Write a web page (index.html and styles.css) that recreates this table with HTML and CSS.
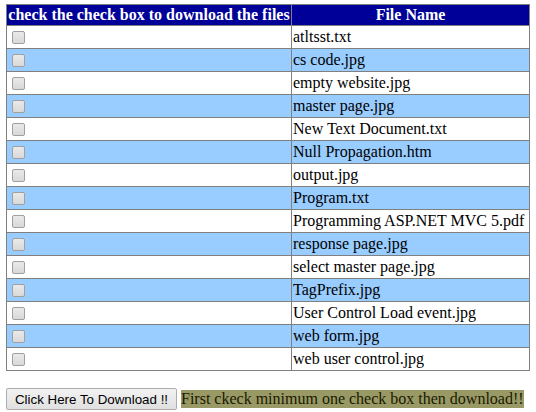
FILE: index.html
```html
<!DOCTYPE html>
<html>
<head>
<meta charset="utf-8">
<title>Download files</title>
<link rel="stylesheet" href="styles.css">
</head>
<body>
<table class="grid">
  <colgroup><col class="c1"><col class="c2"></colgroup>
  <thead>
    <tr><th>check the check box to download the files</th><th>File Name</th></tr>
  </thead>
  <tbody>
    <tr><td><input type="checkbox"></td><td>atltsst.txt</td></tr>
    <tr class="alt"><td><input type="checkbox"></td><td>cs code.jpg</td></tr>
    <tr><td><input type="checkbox"></td><td>empty website.jpg</td></tr>
    <tr class="alt"><td><input type="checkbox"></td><td>master page.jpg</td></tr>
    <tr><td><input type="checkbox"></td><td>New Text Document.txt</td></tr>
    <tr class="alt"><td><input type="checkbox"></td><td>Null Propagation.htm</td></tr>
    <tr><td><input type="checkbox"></td><td>output.jpg</td></tr>
    <tr class="alt"><td><input type="checkbox"></td><td>Program.txt</td></tr>
    <tr><td><input type="checkbox"></td><td>Programming ASP.NET MVC 5.pdf</td></tr>
    <tr class="alt"><td><input type="checkbox"></td><td>response page.jpg</td></tr>
    <tr><td><input type="checkbox"></td><td>select master page.jpg</td></tr>
    <tr class="alt"><td><input type="checkbox"></td><td>TagPrefix.jpg</td></tr>
    <tr><td><input type="checkbox"></td><td>User Control Load event.jpg</td></tr>
    <tr class="alt"><td><input type="checkbox"></td><td>web form.jpg</td></tr>
    <tr><td><input type="checkbox"></td><td>web user control.jpg</td></tr>
  </tbody>
</table>
<div class="actions">
  <button class="btn" type="button">Click Here To Download !!</button>
  <span class="msg">First ckeck minimum one check box then download!!</span>
</div>
</body>
</html>
```
FILE: styles.css
```css
html, body {
  background: #ffffff;
}
body {
  margin: 4px 6px;
  font-family: "Liberation Serif", "Times New Roman", serif;
  font-size: 16px;
  color: #000;
}
.grid {
  border-collapse: collapse;
  table-layout: fixed;
  width: 524px;
  border: 1px solid #808080;
}
.grid .c1 { width: 285px; }
.grid th, .grid td {
  border: 1px solid #808080;
  padding: 0 1px;
  white-space: nowrap;
  overflow: hidden;
}
.grid th {
  background: #000099;
  color: #ffffff;
  font-weight: bold;
  height: 20px;
  text-align: center;
  vertical-align: middle;
  line-height: 18px;
}
.grid td {
  height: 22px;
  vertical-align: middle;
  line-height: 18px;
  text-align: left;
}
.grid tr.alt td {
  background: #99ccff;
}
.grid input[type="checkbox"] {
  -webkit-appearance: none;
  appearance: none;
  width: 13px;
  height: 13px;
  margin: 0 0 0 4px;
  display: block;
  border: 1px solid #a0a0a0;
  border-radius: 2px;
  background: linear-gradient(#e9e9e9, #d9d9d9);
  box-sizing: border-box;
}
.actions {
  display: flex;
  align-items: center;
  gap: 4px;
  margin-top: 17px;
}
.btn {
  font-family: "Liberation Sans", Arial, sans-serif;
  font-size: 13.333px;
  height: 22px;
  width: 171px;
  padding: 0 6px;
  margin: 0;
  border: 1px solid #adadad;
  border-radius: 2px;
  background: linear-gradient(#f2f2f2, #e0e0e0);
  color: #000;
}
.msg {
  background: #999966;
  color: #1a1a00;
  line-height: 18px;
  padding: 0;
}
```
